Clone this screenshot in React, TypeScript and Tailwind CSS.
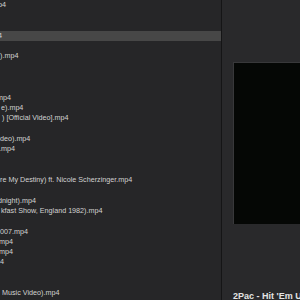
import React from "react";

type Row = { t: string; c: string; hl?: boolean };

const rows: Row[] = [
  { t: "p4", c: "ml-[-2px]" },
  { t: "", c: "" },
  { t: "", c: "" },
  { t: "4", c: "ml-[-2px]", hl: true },
  { t: "", c: "" },
  { t: ").mp4", c: "ml-[0px]" },
  { t: "", c: "" },
  { t: "", c: "" },
  { t: "", c: "" },
  { t: "mp4", c: "ml-[-3px]" },
  { t: "e).mp4", c: "ml-[1px]" },
  { t: ") [Official Video].mp4", c: "ml-[2px]" },
  { t: "", c: "" },
  { t: "deo).mp4", c: "ml-[0px]" },
  { t: ".mp4", c: "ml-[-1px]" },
  { t: "", c: "" },
  { t: "", c: "" },
  { t: "re My Destiny) ft. Nicole Scherzinger.mp4", c: "ml-[0px]" },
  { t: "", c: "" },
  { t: "dnight).mp4", c: "ml-[-2px]" },
  { t: "kfast Show, England 1982).mp4", c: "ml-[1px]" },
  { t: "", c: "" },
  { t: "007.mp4", c: "ml-[0px]" },
  { t: "mp4", c: "ml-[-1px]" },
  { t: "mp4", c: "ml-[-1px]" },
  { t: "4", c: "ml-[0px]" },
  { t: "", c: "" },
  { t: "", c: "" },
  { t: "Music Video).mp4", c: "ml-[2px]" },
  { t: "ve at Wembley).mp4", c: "ml-[0px]" },
];

export default function App() {
  return (
    <div
      className="flex h-[300px] w-[300px] overflow-hidden bg-[#262628]"
      style={{ fontFamily: '"Liberation Sans", Arial, sans-serif' }}
    >
      <div className="flex w-[221px] shrink-0 flex-col overflow-hidden bg-[#262628]">
        {rows.map((r, i) => (
          <div
            key={i}
            className={
              r.hl
                ? "flex h-[10.3px] shrink-0 items-center whitespace-nowrap bg-[#474747]"
                : "flex h-[10.3px] shrink-0 items-center whitespace-nowrap"
            }
          >
            <span
              className={`${r.c} text-[7.2px] leading-[10.3px] text-[#d2d2d2]`}
            >
              {r.t}
            </span>
          </div>
        ))}
      </div>
      <div className="w-px shrink-0 bg-[#151516]" />
      <div className="flex flex-1 flex-col overflow-hidden bg-[#29292b] pl-[11px] pt-[62px]">
        <div className="h-[162px] w-full shrink-0 border-t border-l border-[#38383a] bg-[#050705]" />
        <div className="mt-[67px] whitespace-nowrap text-[9px] font-bold leading-[11px] text-[#e4e4e4]">
          2Pac - Hit 'Em Up
        </div>
      </div>
    </div>
  );
}
